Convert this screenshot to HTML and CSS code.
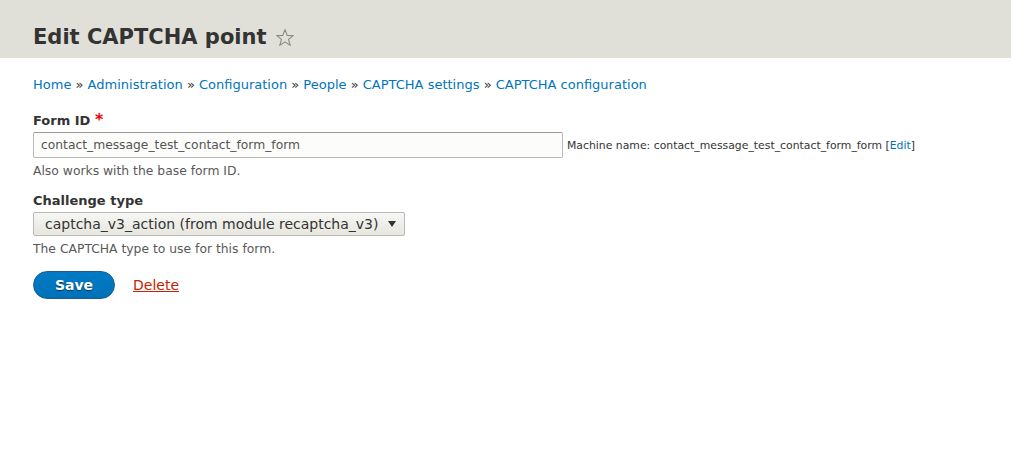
FILE: index.html
```html
<!DOCTYPE html>
<html>
<head>
<meta charset="utf-8">
<link rel="stylesheet" href="styles.css">
</head>
<body>
<header class="page-header">
  <h1 class="page-title">Edit CAPTCHA point <span class="star"><svg width="20" height="20" viewBox="0 0 20 20"><path d="M10 1.6 L12.2 7.4 L18.3 7.6 L13.5 11.4 L15.2 17.4 L10 13.9 L4.8 17.4 L6.5 11.4 L1.7 7.6 L7.8 7.4 Z" fill="none" stroke="#8a8a7e" stroke-width="1.1" stroke-linejoin="round"/></svg></span></h1>
</header>
<main class="content">
  <nav class="breadcrumb">
    <a href="#">Home</a> » <a href="#">Administration</a> » <a href="#">Configuration</a> » <a href="#">People</a> » <a href="#">CAPTCHA settings</a> » <a href="#">CAPTCHA configuration</a>
  </nav>
  <form class="form">
    <div class="form-item">
      <label class="label">Form ID <span class="req">*</span></label>
      <div class="inline-row">
        <input class="form-text" type="text" value="contact_message_test_contact_form_form">
        <span class="machine-name">Machine name: contact_message_test_contact_form_form <span class="bracket">[</span><a href="#">Edit</a><span class="bracket">]</span></span>
      </div>
      <div class="desc">Also works with the base form ID.</div>
    </div>
    <div class="form-item">
      <label class="label">Challenge type</label>
      <div class="select">
        <span class="select-text">captcha_v3_action (from module recaptcha_v3)</span>
        <span class="arrow"></span>
      </div>
      <div class="desc">The CAPTCHA type to use for this form.</div>
    </div>
    <div class="actions">
      <button type="button" class="button-primary">Save</button>
      <a href="#" class="delete">Delete</a>
    </div>
  </form>
</main>
</body>
</html>
```
FILE: styles.css
```css
html, body {
  margin: 0;
  padding: 0;
  background: #fff;
  font-family: "DejaVu Sans", Verdana, sans-serif;
  font-size: 13px;
  color: #333;
}
.page-header {
  background: #e0e0d8;
  height: 58px;
  box-sizing: border-box;
  padding: 22px 33px 0;
}
.page-title {
  margin: 0;
  font-size: 21px;
  font-weight: bold;
  line-height: 30px;
  color: #333;
  display: flex;
  align-items: center;
}
.star {
  display: inline-flex;
  margin-left: 8px;
  margin-top: 1px;
}
.content {
  padding: 17px 33px 0;
}
.breadcrumb {
  font-size: 13px;
  line-height: 20px;
  color: #333;
}
a {
  color: #0074bd;
  text-decoration: none;
}
.form {
  margin-top: 16px;
}
.form-item {
  margin-bottom: 12px;
}
.label {
  display: block;
  font-weight: bold;
  font-size: 13px;
  line-height: 20px;
  color: #333;
  margin-bottom: 1px;
}
.req {
  color: #e00;
  font-size: 16px;
  line-height: 10px;
}
.inline-row {
  display: flex;
  align-items: center;
}
.form-text {
  width: 530px;
  height: 26px;
  box-sizing: border-box;
  border: 1px solid #b8b8b8;
  border-top-color: #999;
  border-radius: 2px;
  background: #fcfcfa;
  padding: 0 7px;
  font-family: "DejaVu Sans", Verdana, sans-serif;
  font-size: 12.3px;
  color: #555;
  margin: 0;
}
.machine-name {
  font-size: 10.85px;
  margin-left: 4px;
  color: #333;
}
.bracket { color: #333; }
.desc {
  font-size: 12.35px;
  color: #595959;
  line-height: 16px;
  margin-top: 5px;
}
.select {
  display: flex;
  align-items: center;
  justify-content: space-between;
  width: 372px;
  height: 24px;
  box-sizing: border-box;
  border: 1px solid #b8b8b8;
  border-radius: 2px;
  background: linear-gradient(#f6f6f3, #e7e7df);
  padding: 0 8px 0 11px;
  font-size: 14px;
  color: #333;
}
.arrow {
  width: 0;
  height: 0;
  border-left: 4.5px solid transparent;
  border-right: 4.5px solid transparent;
  border-top: 6px solid #333;
}
.actions {
  display: flex;
  align-items: center;
  margin-top: 14px;
}
.button-primary {
  width: 82px;
  height: 28px;
  border-radius: 14px;
  border: 1px solid #1e5c90;
  background: linear-gradient(#007bc6, #0071b8);
  color: #fff;
  font-family: "DejaVu Sans", Verdana, sans-serif;
  font-weight: bold;
  font-size: 14px;
  text-shadow: 0 1px 1px rgba(0,0,0,0.5);
  padding: 0;
}
.delete {
  margin-left: 18px;
  color: #c72100;
  text-decoration: underline;
  font-size: 14px;
}
```
